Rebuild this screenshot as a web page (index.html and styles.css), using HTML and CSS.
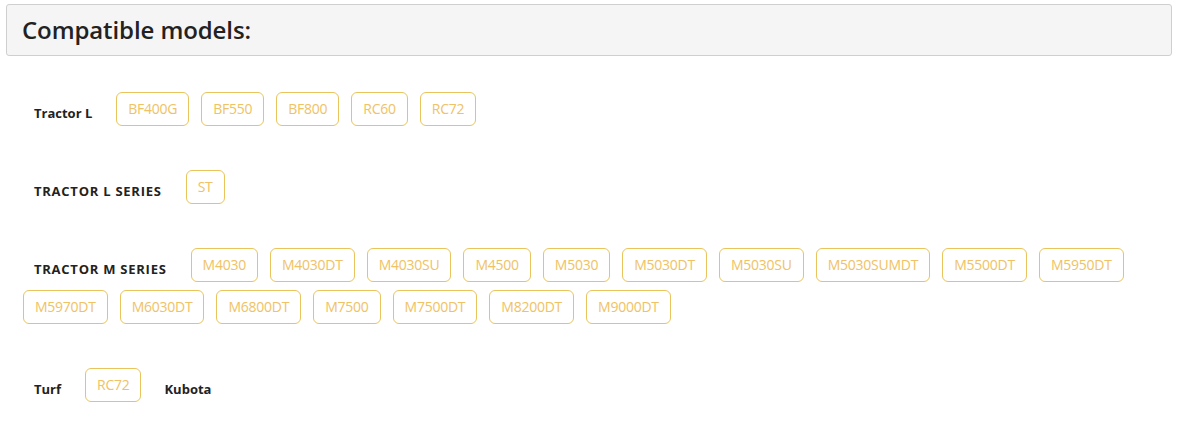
FILE: index.html
```html
<!DOCTYPE html>
<html lang="en">
<head>
<meta charset="utf-8">
<title>Compatible models</title>
<link rel="stylesheet" href="styles.css">
</head>
<body>
<div class="page">
  <div class="title-box">
    <h2 class="title">Compatible models:</h2>
  </div>
  <div class="models">
    <div class="row">
      <span class="label">Tractor L</span>
      <span class="chip">BF400G</span>
      <span class="chip">BF550</span>
      <span class="chip">BF800</span>
      <span class="chip">RC60</span>
      <span class="chip">RC72</span>
    </div>
    <div class="row">
      <span class="label label-caps">TRACTOR L SERIES</span>
      <span class="chip">ST</span>
    </div>
    <div class="row">
      <span class="label label-caps">TRACTOR M SERIES</span>
      <span class="chip">M4030</span>
      <span class="chip">M4030DT</span>
      <span class="chip">M4030SU</span>
      <span class="chip">M4500</span>
      <span class="chip">M5030</span>
      <span class="chip">M5030DT</span>
      <span class="chip">M5030SU</span>
      <span class="chip">M5030SUMDT</span>
      <span class="chip">M5500DT</span>
      <span class="chip">M5950DT</span>
      <span class="chip">M5970DT</span>
      <span class="chip">M6030DT</span>
      <span class="chip">M6800DT</span>
      <span class="chip">M7500</span>
      <span class="chip">M7500DT</span>
      <span class="chip">M8200DT</span>
      <span class="chip">M9000DT</span>
    </div>
    <div class="row">
      <span class="label">Turf</span>
      <span class="chip">RC72</span>
      <span class="label">Kubota</span>
    </div>
  </div>
</div>
</body>
</html>
```

FILE: styles.css
```css
html, body {
  margin: 0;
  padding: 0;
  background: #ffffff;
}

body {
  font-family: "Open Sans", "Noto Sans", "Liberation Sans", sans-serif;
  color: #222222;
}

.page {
  padding: 4px 7px 0 6px;
}

.title-box {
  box-sizing: border-box;
  height: 52px;
  border: 1px solid #cfcfcf;
  border-radius: 3px;
  background: #f5f5f5;
  padding: 0 15px;
  display: flex;
  align-items: center;
}

.title {
  margin: 0;
  font-size: 24px;
  font-weight: 600;
  line-height: 30px;
  color: #222222;
  letter-spacing: -0.1px;
}

.models {
  padding: 36px 0 0 17px;
}

.row {
  display: flex;
  flex-wrap: wrap;
  align-items: center;
  gap: 8px 12px;
  margin-bottom: 44px;
}

.label {
  padding: 7px 12px 0 11px;
  font-size: 13px;
  font-weight: 700;
  line-height: 18px;
  color: #222222;
}

.label-caps {
  letter-spacing: 0.75px;
}

.chip {
  border: 1px solid #e9c45c;
  border-radius: 6px;
  padding: 6px 11px;
  font-size: 14px;
  line-height: 20px;
  letter-spacing: -0.25px;
  color: #efc264;
}
```
